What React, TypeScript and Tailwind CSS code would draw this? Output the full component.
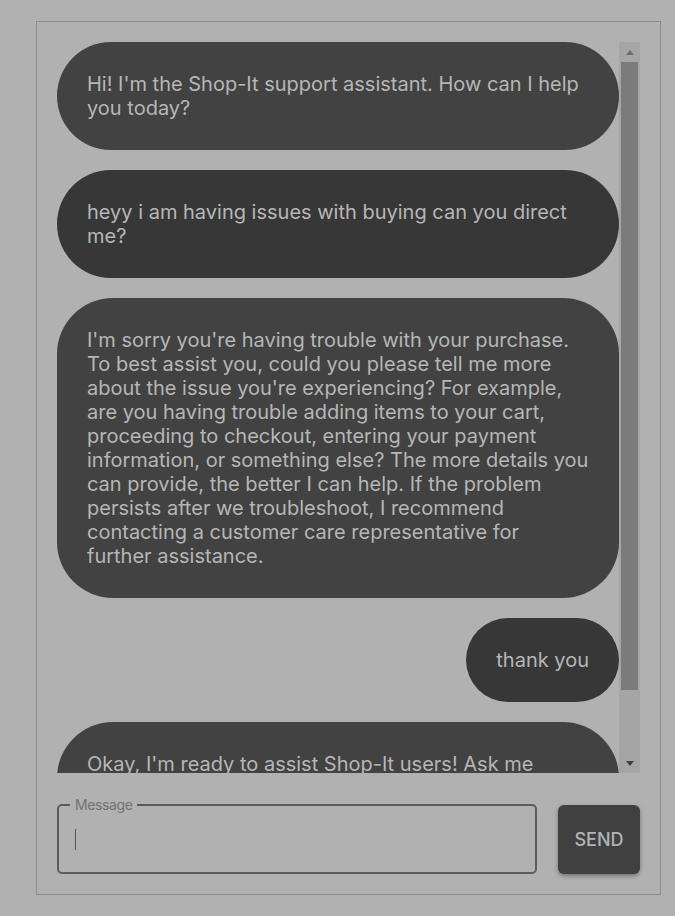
import React from 'react';

type Msg = { from: 'bot' | 'user'; text: string };

const messages: Msg[] = [
  { from: 'bot', text: "Hi! I'm the Shop-It support assistant. How can I help you today?" },
  { from: 'user', text: 'heyy i am having issues with buying can you direct me?' },
  {
    from: 'bot',
    text: "I'm sorry you're having trouble with your purchase. To best assist you, could you please tell me more about the issue you're experiencing? For example, are you having trouble adding items to your cart, proceeding to checkout, entering your payment information, or something else? The more details you can provide, the better I can help. If the problem persists after we troubleshoot, I recommend contacting a customer care representative for further assistance.",
  },
  { from: 'user', text: 'thank you' },
  {
    from: 'bot',
    text: "Okay, I'm ready to assist Shop-It users! Ask me anything about your orders, payments, shipping or returns.",
  },
];

const App: React.FC = () => {
  return (
    <div className="min-h-[916px] bg-[#b1b1b1] pt-[21px] font-['Inter','Liberation_Sans',sans-serif]">
      <div className="ml-[36px] w-[625px] border border-[#8c8c8c] p-5">
        <div className="flex h-[731px]">
          <div className="flex flex-1 flex-col gap-5 overflow-hidden">
            {messages.map((m, i) => (
              <div key={i} className={m.from === 'user' ? 'flex shrink-0 justify-end' : 'flex shrink-0 justify-start'}>
                <div
                  className={
                    'rounded-[56px] px-[30px] py-[30px] text-[20px] leading-[24px] text-[#b6b6b6] ' +
                    (m.from === 'user' ? 'bg-[#373737]' : 'bg-[#424242]')
                  }
                >
                  {m.text}
                </div>
              </div>
            ))}
          </div>

          {/* scrollbar */}
          <div className="flex w-[21px] flex-col bg-[#a5a5a5]">
            <div className="flex h-[20px] items-center justify-center">
              <svg width="8" height="5" viewBox="0 0 8 5"><polygon points="4,0 8,5 0,5" fill="#6e6e6e" /></svg>
            </div>
            <div className="flex-1">
              <div className="mx-[2px] h-[628px] bg-[#7b7b7b]" />
            </div>
            <div className="flex h-[20px] items-center justify-center">
              <svg width="8" height="5" viewBox="0 0 8 5"><polygon points="0,0 8,0 4,5" fill="#3f3f3f" /></svg>
            </div>
          </div>
        </div>

        <div className="mt-[24px] flex gap-[21px]">
          <fieldset className="flex h-[77px] flex-1 items-center rounded-[5px] border-2 border-[#5c5c5c] px-4 pb-[7px]">
            <legend className="ml-[-5px] px-[5px] text-[14px] leading-[16px] tracking-[-0.4px] text-[#727272]">Message</legend>
            <span className="h-[21px] w-px bg-[#5a5a5a]" />
          </fieldset>
          <button className="mt-[8px] h-[69px] w-[82px] rounded-[6px] bg-[#404040] text-[18px] font-medium text-[#b3b3b3] shadow-[0_2px_4px_rgba(0,0,0,0.35)]">
            SEND
          </button>
        </div>
      </div>
    </div>
  );
};

export default App;
